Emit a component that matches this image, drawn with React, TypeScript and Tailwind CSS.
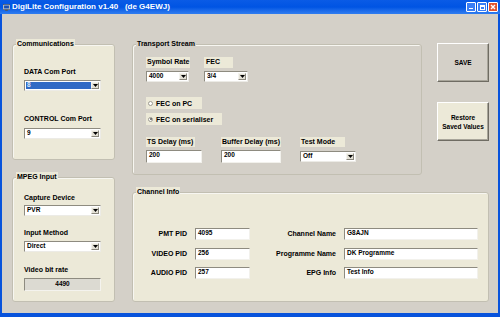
import React from "react";

const CREAM = "bg-[#ece9d8]";

function Arrow() {
  return (
    <div className="flex h-full w-[8px] shrink-0 items-center justify-center border-l border-t border-l-[#f4f3ee] border-t-[#f4f3ee] border-r border-b border-r-[#8a877c] border-b-[#8a877c] bg-[#e4e1d6]">
      <svg width="5" height="3" viewBox="0 0 5 3">
        <path d="M0 0 L5 0 L2.5 3 Z" fill="#000" />
      </svg>
    </div>
  );
}

function Select({ w, value, hi }: { w: string; value: string; hi?: boolean }) {
  return (
    <div className={`flex h-[11px] ${w} border-t border-l border-[#8e8b80] border-b-[#ecebe6] border-r-[#ecebe6] border-b border-r bg-white p-[1px]`}>
      <div className={`flex flex-1 items-center whitespace-nowrap pl-[1px] text-[6.5px] leading-none ${hi ? "bg-[#316ac5] text-[#dfe7f7]" : "text-black"}`}>{value}</div>
      <Arrow />
    </div>
  );
}

function Input({ w, value, h = "h-[12px]" }: { w: string; value: string; h?: string }) {
  return (
    <div className={`flex ${h} ${w} items-start whitespace-nowrap border-t border-l border-[#8e8b80] border-b-[#f2f1ec] border-r-[#f2f1ec] border-b border-r bg-white pl-[2px] pt-[1px] text-[6.5px] leading-none text-black`}>
      {value}
    </div>
  );
}

function Group({ title, cls, children }: { title: string; cls: string; children?: React.ReactNode }) {
  const bg = cls.includes("cream") ? CREAM : "bg-[#d4d0c8]";
  return (
    <div className={`relative rounded-[3px] border border-[#c2bfb2] shadow-[inset_1px_1px_0_#f7f6f1] ${bg} ${cls.replace("cream", "")}`}>
      <div className={`absolute -top-[6px] left-[3px] whitespace-nowrap px-[1px] text-[7px] leading-[10px] text-black ${bg}`}>{title}</div>
      {children}
    </div>
  );
}

function Lbl({ children, cls = "" }: { children: React.ReactNode; cls?: string }) {
  return <div className={`whitespace-nowrap text-[7px] leading-[10px] text-black ${cls}`}>{children}</div>;
}

function Radio({ label, checked, w }: { label: string; checked?: boolean; w: string }) {
  return (
    <div className={`flex h-[12px] ${w} items-center gap-[3px] ${CREAM} pl-[2px]`}>
      <div className="flex h-[5px] w-[5px] items-center justify-center rounded-full border border-[#9c9a90] bg-white">
        {checked && <div className="h-[2px] w-[2px] rounded-full bg-[#555]" />}
      </div>
      <span className="whitespace-nowrap text-[7px] leading-none text-black">{label}</span>
    </div>
  );
}

function Btn({ children, cream }: { children: React.ReactNode; cream?: boolean }) {
  return (
    <div
      className={`flex h-[39px] w-[52px] items-center justify-center border border-t-white border-l-white border-r-[#6f6c63] border-b-[#6f6c63] shadow-[inset_-1px_-1px_0_#a8a59a] text-center text-[6.5px] leading-[9px] text-black ${cream ? CREAM : "bg-[#d4d0c8]"}`}
    >
      {children}
    </div>
  );
}

export default function App() {
  return (
    <div className="flex h-[317px] w-[500px] flex-col overflow-hidden bg-[#0853dc] font-['Liberation_Sans',Arial,sans-serif] font-bold">
      {/* Title bar */}
      <div className="flex h-[14px] shrink-0 items-center bg-gradient-to-b from-[#0a5be6] via-[#0054e3] to-[#2f7df0] pl-[3px] pr-[2px]">
        <svg width="7" height="7" viewBox="0 0 8 8" className="shrink-0">
          <rect x="0" y="0.5" width="8" height="6" fill="#e8e8e8" stroke="#333" strokeWidth="0.6" />
          <rect x="1.2" y="1.6" width="5.6" height="3.6" fill="#1a4fb0" />
          <rect x="2.5" y="6.5" width="3" height="1.3" fill="#555" />
        </svg>
        <span className="ml-[2px] whitespace-pre text-[8px] leading-none text-white">DigiLite Configuration v1.40   (de G4EWJ)</span>
        <div className="ml-auto flex gap-[1px]">
          <div className="flex h-[10px] w-[10px] items-end justify-center rounded-[1px] border border-white bg-[#3a7ef5] pb-[2px]">
            <div className="h-[1.5px] w-[4px] bg-white" />
          </div>
          <div className="flex h-[10px] w-[10px] items-center justify-center rounded-[1px] border border-white bg-[#3a7ef5]">
            <div className="h-[5px] w-[5px] border border-t-2 border-white" />
          </div>
          <div className="flex h-[10px] w-[10px] items-center justify-center rounded-[1px] border border-white bg-[#e0542f]">
            <svg width="6" height="6" viewBox="0 0 6 6">
              <path d="M1 1 L5 5 M5 1 L1 5" stroke="#fff" strokeWidth="1.4" />
            </svg>
          </div>
        </div>
      </div>

      {/* Body */}
      <div className="mx-[2px] mb-[4px] flex flex-1 gap-[17px] bg-[#d4d0c8] pl-[10px] pt-[30px]">
        {/* Left column */}
        <div className="flex w-[103px] flex-col gap-[17px]">
          <Group title="Communications" cls="cream h-[116px]">
            <div className="flex flex-col pl-[11px] pt-[22px]">
              <Lbl>DATA Com Port</Lbl>
              <div className="mt-[3px]">
                <Select w="w-[77px]" value="8" hi />
              </div>
              <Lbl cls="mt-[23px]">CONTROL Com Port</Lbl>
              <div className="mt-[4px]">
                <Select w="w-[77px]" value="9" />
              </div>
            </div>
          </Group>
          <Group title="MPEG Input" cls="cream h-[125px]">
            <div className="flex flex-col pl-[11px] pt-[15px]">
              <Lbl>Capture Device</Lbl>
              <div className="mt-[2px]">
                <Select w="w-[77px]" value="PVR" />
              </div>
              <Lbl cls="mt-[12px]">Input Method</Lbl>
              <div className="mt-[3px]">
                <Select w="w-[77px]" value="Direct" />
              </div>
              <Lbl cls="mt-[13px]">Video bit rate</Lbl>
              <div className="mt-[3px] flex h-[13px] w-[77px] items-center justify-center border-t border-l border-[#8e8b80] border-b border-r border-b-[#f4f3ee] border-r-[#f4f3ee] bg-[#dcdad2] text-[6.5px] leading-none text-black">
                4490
              </div>
            </div>
          </Group>
        </div>

        {/* Right area */}
        <div className="flex w-[357px] flex-col gap-[17px]">
          <div className="flex gap-[15px]">
            <Group title="Transport Stream" cls="h-[131px] w-[290px]">
              <div className="flex flex-col pl-[13px] pt-[12px]">
                <div className="flex gap-[14px]">
                  <div className="flex flex-col gap-[3px]">
                    <Lbl cls={`${CREAM} h-[11px] w-[44px] pl-[1px]`}>Symbol Rate</Lbl>
                    <Select w="w-[43px]" value="4000" />
                  </div>
                  <div className="flex flex-col gap-[3px]">
                    <Lbl cls={`${CREAM} h-[11px] w-[29px] pl-[2px]`}>FEC</Lbl>
                    <Select w="w-[44px]" value="3/4" />
                  </div>
                </div>
                <div className="mt-[15px] flex flex-col gap-[4px]">
                  <Radio label="FEC on PC" w="w-[56px]" />
                  <Radio label="FEC on serialiser" checked w="w-[76px]" />
                </div>
                <div className="mt-[12px] flex gap-[19px]">
                  <div className="flex flex-col gap-[3px]">
                    <Lbl cls={`${CREAM} h-[10px] w-[49px] pl-[1px]`}>TS Delay (ms)</Lbl>
                    <Input w="w-[56px]" value="200" h="h-[13px]" />
                  </div>
                  <div className="flex flex-col gap-[3px]">
                    <Lbl cls={`${CREAM} h-[10px] w-[60px] pl-[1px]`}>Buffer Delay (ms)</Lbl>
                    <Input w="w-[60px]" value="200" h="h-[13px]" />
                  </div>
                  <div className="flex flex-col gap-[4px]">
                    <Lbl cls={`${CREAM} h-[10px] w-[45px] pl-[1px]`}>Test Mode</Lbl>
                    <Select w="w-[56px]" value="Off" />
                  </div>
                </div>
              </div>
            </Group>
            <div className="-mt-[1px] flex flex-col gap-[20px]">
              <Btn>SAVE</Btn>
              <Btn cream>
                Restore
                <br />
                Saved Values
              </Btn>
            </div>
          </div>

          <Group title="Channel Info" cls="cream h-[110px] w-[357px]">
            <div className="grid grid-cols-[54px_55px_78px_134px] items-center gap-x-[8px] gap-y-[7.5px] pt-[35px]">
              <Lbl cls="text-right">PMT PID</Lbl>
              <Input w="w-[55px]" value="4095" />
              <Lbl cls="text-right">Channel Name</Lbl>
              <Input w="w-[134px]" value="G8AJN" />
              <Lbl cls="text-right">VIDEO PID</Lbl>
              <Input w="w-[55px]" value="256" />
              <Lbl cls="text-right">Programme Name</Lbl>
              <Input w="w-[134px]" value="DK Programme" />
              <Lbl cls="text-right">AUDIO PID</Lbl>
              <Input w="w-[55px]" value="257" />
              <Lbl cls="text-right">EPG Info</Lbl>
              <Input w="w-[134px]" value="Test Info" />
            </div>
          </Group>
        </div>
      </div>
    </div>
  );
}
